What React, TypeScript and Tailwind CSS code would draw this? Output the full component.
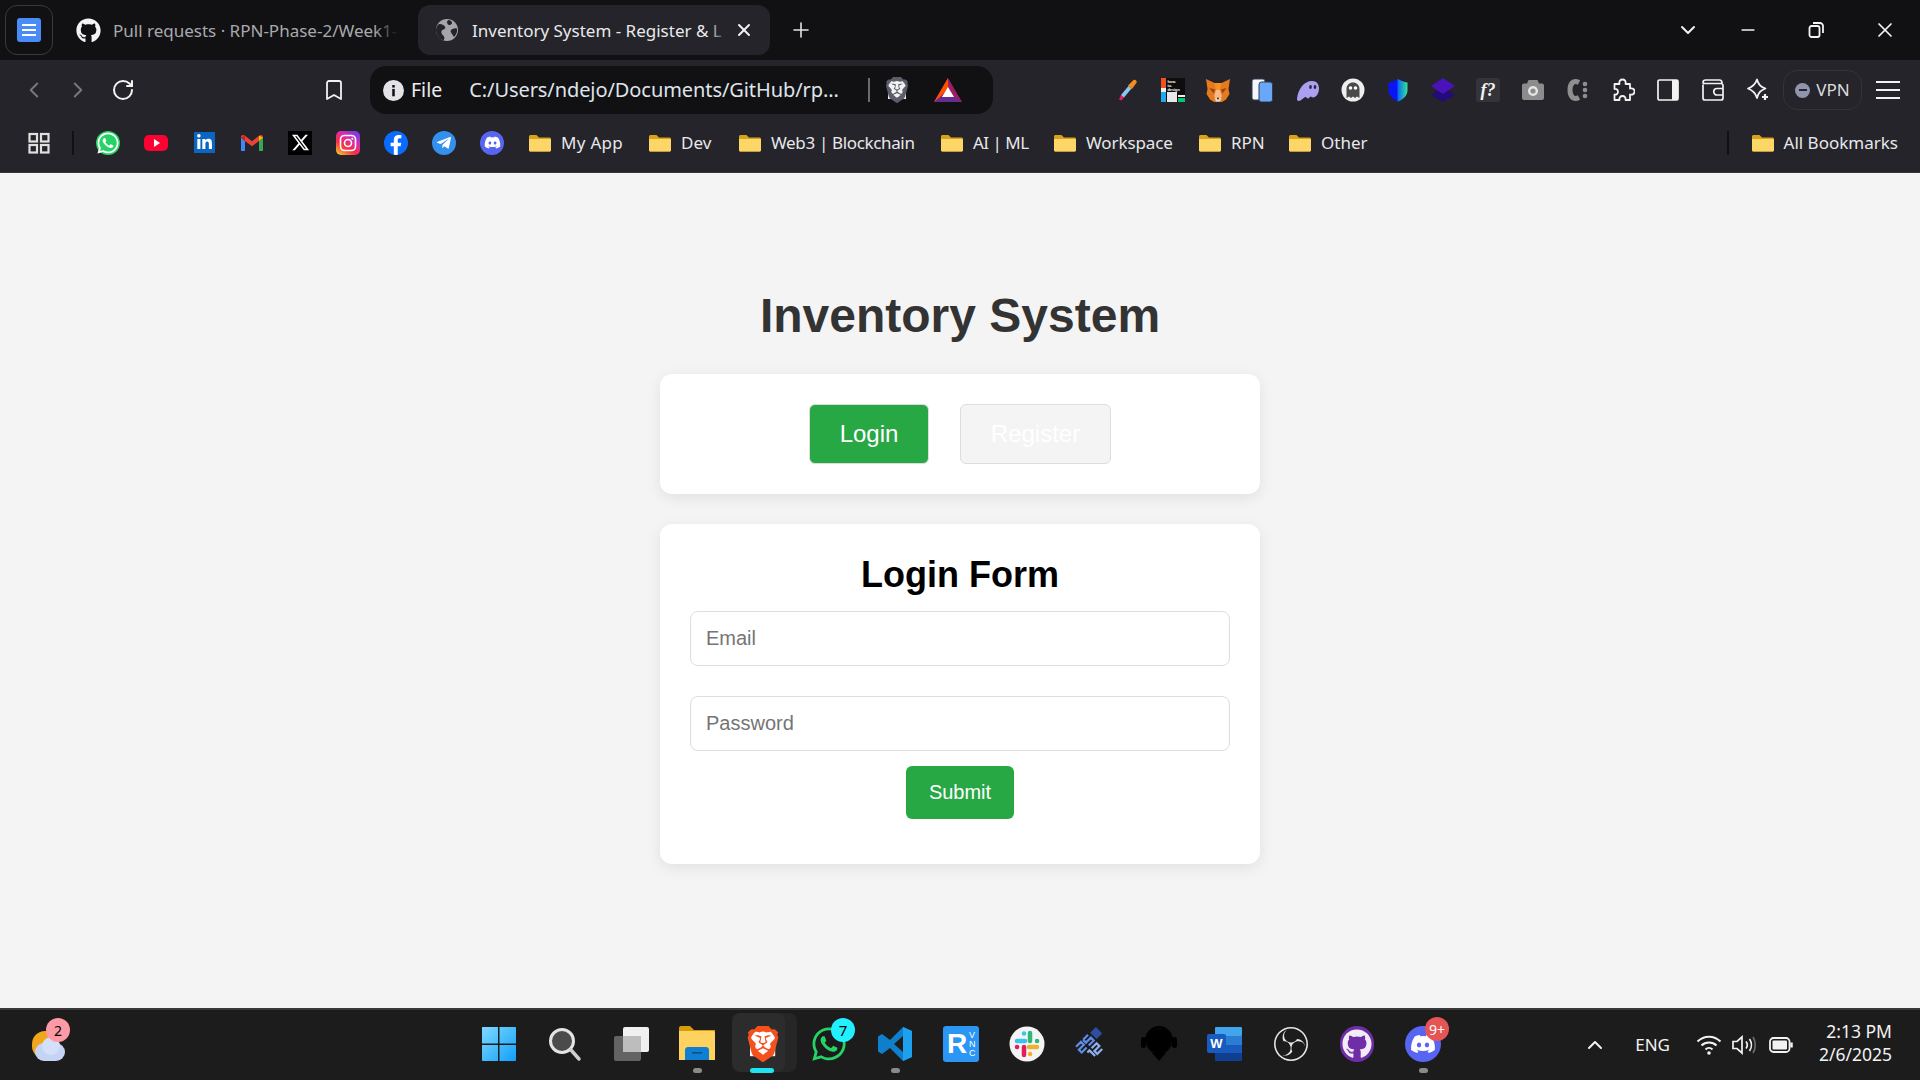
import React from 'react';
import { FaWhatsapp, FaLinkedinIn, FaFacebookF, FaTelegramPlane, FaDiscord, FaGithub } from 'react-icons/fa';
import { FaXTwitter } from 'react-icons/fa6';
import { SiBrave, SiObsstudio } from 'react-icons/si';
import { ChevronLeft, ChevronRight, RotateCw, Bookmark, Plus, X, ChevronDown, Minus, ChevronUp } from 'lucide-react';

const Folder = () => (
  <svg width="24" height="24" viewBox="0 0 24 24" className="shrink-0">
    <path d="M1 5.500C1 4.700 1.700 4 2.500 4h6l2.500 2.500h10.500c.8 0 1.500.7 1.500 1.500v11c0 .8-.7 1.500-1.500 1.500h-19C1.700 20.500 1 19.800 1 19z" fill="#d9a21b" />
    <path d="M1 8h21.500c.3 0 .5.200.5.500V19c0 .8-.7 1.500-1.500 1.500h-19C1.700 20.500 1 19.800 1 19z" fill="#fcd667" />
  </svg>
);

const bookmarks = [
  { name: 'My App', width: 'w-[62px]', fit: 'tracking-[0.3px]' },
  { name: 'Dev', width: 'w-[32px]', fit: 'tracking-[0px]' },
  { name: 'Web3 | Blockchain', width: 'w-[144px]', fit: 'tracking-[-0.35px]' },
  { name: 'AI | ML', width: 'w-[55px]', fit: 'tracking-[-0.5px]' },
  { name: 'Workspace', width: 'w-[87px]', fit: 'tracking-[-0.1px]' },
  { name: 'RPN', width: 'w-[32px]', fit: 'tracking-[-0.1px]' },
  { name: 'Other', width: 'w-[45px]', fit: 'tracking-[0px]' },
];

const Gmail = () => (
  <svg width="24" height="24" viewBox="0 0 24 24">
    <path d="M1 6.500V20h4V10z" fill="#4285f4" />
    <path d="M23 6.500V20h-4V10z" fill="#34a853" />
    <path d="M1 6.500C1 4 3.500 3.500 5 4.800l7 5.400 7-5.400C20.500 3.500 23 4 23 6.500L19 10l-7 5.200L5 10z" fill="#ea4335" />
    <path d="M19 4.800 23 6.500 19 10z" fill="#fbbc04" />
    <path d="M1 6.500 5 4.800V10z" fill="#c5221f" />
  </svg>
);

const Instagram = () => (
  <svg width="24" height="24" viewBox="0 0 24 24">
    <defs>
      <linearGradient id="ig" x1="0.1" y1="1" x2="0.8" y2="0">
        <stop offset="0" stopColor="#fdc92f" />
        <stop offset="0.35" stopColor="#f5313f" />
        <stop offset="0.7" stopColor="#d92bb5" />
        <stop offset="1" stopColor="#6d3ee8" />
      </linearGradient>
    </defs>
    <rect width="24" height="24" rx="5" fill="url(#ig)" />
    <rect x="4.500" y="4.500" width="15" height="15" rx="4" fill="none" stroke="#fff" strokeWidth="1.600" />
    <circle cx="12" cy="12" r="3.500" fill="none" stroke="#fff" strokeWidth="1.600" />
    <circle cx="16.300" cy="7.700" r="1" fill="#fff" />
  </svg>
);

const Dropper = () => (
  <svg width="24" height="24" viewBox="0 0 24 24">
    <path d="M3 21.500 5 17l3 2.500-2.500 3z" fill="#e91e63" />
    <path d="M5 17 12.500 8l3 2.500L8 19.500z" fill="#8ec5f0" />
    <path d="M12 7.500 17.500 2c1.500-1.200 4 .8 3 2.800L16 11z" fill="#f58a1f" />
  </svg>
);

const HowToDesign = () => (
  <svg width="24" height="24" viewBox="0 0 24 24">
    <rect width="24" height="24" fill="#0d0d0d" />
    <rect width="5" height="10" fill="#f1511b" />
    <rect y="10" width="5" height="4" fill="#eeeeee" />
    <rect y="14" width="5" height="10" fill="#1eaaf1" />
    <rect x="6" y="14" width="10" height="10" fill="#e8e8e8" />
    <rect x="17" y="17" width="7" height="2" fill="#eeeeee" />
    <rect x="17" y="20" width="7" height="4" fill="#00c76a" />
    <text x="6.500" y="5" fontSize="3.800" fontWeight="700" fill="#fff" fontFamily="Liberation Sans, sans-serif">how.</text>
    <text x="6.500" y="9" fontSize="3.800" fontWeight="700" fill="#fff" fontFamily="Liberation Sans, sans-serif">to.</text>
    <text x="6.500" y="13" fontSize="3.800" fontWeight="700" fill="#fff" fontFamily="Liberation Sans, sans-serif">design</text>
  </svg>
);

const Fox = () => (
  <svg width="24" height="24" viewBox="0 0 24 24">
    <path d="M0 1 8.500 5h7L24 1l-1.500 10 1 5-3.500 5.500-4 2.500H8l-4-2.500L.5 16l1-5z" fill="#e8791c" />
    <path d="M8.500 5h7L14 12h-4z" fill="#f6921e" />
    <path d="M3.500 10l5.500 1.500L7.500 15.500zM20.500 10L15 11.500l1.500 4z" fill="#8a4a18" />
    <path d="M10 12h4l2 6.500-4 3.500-4-3.500z" fill="#f7b98a" />
    <path d="M8.500 20h7l-1.500 3.500h-4z" fill="#e9d9ca" />
    <circle cx="12" cy="20.500" r="1" fill="#3b2a1d" />
  </svg>
);

const Cards = () => (
  <svg width="24" height="24" viewBox="0 0 24 24">
    <rect x="1" y="1" width="13" height="21" rx="2" fill="#f5f7fb" stroke="#2f3b52" />
    <rect x="8" y="4" width="13.500" height="20" rx="2.500" fill="#6aa7f8" stroke="#2f3b52" />
  </svg>
);

const Phantom = () => (
  <svg width="24" height="24" viewBox="0 0 24 24">
    <path d="M1 21C2 11 8 3 16 3c5 0 7 3.500 7 7.500 0 5-3 9-6 9-1.200 0-1.500-1-2.300-1-.9 0-1.300 2-2.700 2-1.200 0-1.500-1.500-2.300-1.500C7.500 19.500 5 23 3 23c-1.300 0-2.200-.8-2-2z" fill="#ab9ff2" />
    <ellipse cx="14.500" cy="9" rx="1.300" ry="2" fill="#24242a" />
    <ellipse cx="19" cy="9" rx="1.300" ry="2" fill="#24242a" />
  </svg>
);

const Ghostery = () => (
  <svg width="24" height="24" viewBox="0 0 24 24">
    <circle cx="12" cy="12" r="11.500" fill="#efefef" />
    <path d="M5.500 20V11C5.500 7 8.500 4.500 12 4.500S18.500 7 18.500 11v9l-2.500-1.500L14 20l-2-1.500L10 20l-2-1.500z" fill="#4a4a4a" />
    <circle cx="9.500" cy="10" r="1.800" fill="#fff" />
    <circle cx="14.500" cy="10" r="1.800" fill="#fff" />
  </svg>
);

const Shield = () => (
  <svg width="24" height="24" viewBox="0 0 24 24">
    <defs>
      <linearGradient id="sh" x1="0" y1="0" x2="1" y2="0">
        <stop offset="0.45" stopColor="#0a14f5" />
        <stop offset="0.5" stopColor="#0b6df0" />
        <stop offset="1" stopColor="#35e39a" />
      </linearGradient>
    </defs>
    <path d="M12 1c3 2 6 3 9.500 3.500V12c0 6-4.500 9.500-9.500 11.500C7 21.500 2.500 18 2.500 12V4.500C6 4 9 3 12 1z" fill="url(#sh)" />
  </svg>
);

const Layers = () => (
  <svg width="24" height="24" viewBox="0 0 24 24">
    <path d="M12 9 24 17l-12 7L0 17z" fill="#230b7a" />
    <path d="M12 0 24 8l-12 8L0 8z" fill="#4a12b8" />
  </svg>
);

const FontTile = () => (
  <div className="flex h-6 w-6 items-center justify-center rounded-[3px] bg-[#333338] font-['Liberation_Serif',serif] text-[18px] font-bold italic leading-none text-[#f2f2f2]">
    f?
  </div>
);

const Camera = () => (
  <svg width="24" height="24" viewBox="0 0 24 24">
    <path d="M1 7.500C1 6.400 1.900 5.500 3 5.500h3L7.500 2h9L18 5.500h3c1.100 0 2 .9 2 2V20c0 1.100-.9 2-2 2H3c-1.100 0-2-.9-2-2z" fill="#8c8c8c" />
    <circle cx="12" cy="13" r="5" fill="#e5e5e5" />
    <circle cx="12" cy="13" r="2.600" fill="#8c8c8c" />
  </svg>
);

const CDots = () => (
  <svg width="24" height="24" viewBox="0 0 24 24">
    <path d="M13 4.500C7 1.500 4 6 4 12s3 10.500 9 7.500" fill="none" stroke="#8f8f8f" strokeWidth="5" />
    <circle cx="19" cy="6" r="2.300" fill="#8f8f8f" />
    <circle cx="19" cy="12" r="2.300" fill="#8f8f8f" />
    <circle cx="19" cy="18" r="2.300" fill="#8f8f8f" />
  </svg>
);

const PuzzlePiece = () => (
  <svg width="24" height="24" viewBox="0 0 24 24" fill="none" stroke="#f2f2f2" strokeWidth="1.800" strokeLinejoin="round">
    <path d="M3.500 6H8.500c-.8-3 1-4.500 3-4.500s3.800 1.500 3 4.500H19v4.500c3-.8 4.500 1 4.500 3s-1.500 3.800-4.500 3V22h-4.500c.5-2.500-1-4-3-4s-3.500 1.500-3 4H3.500v-5.500c2 .5 3.500-1 3.500-2.800S5.500 10.500 3.500 11z" />
  </svg>
);

const SidePanel = () => (
  <svg width="24" height="24" viewBox="0 0 24 24">
    <rect x="2" y="2" width="20" height="20" rx="1.500" fill="none" stroke="#f2f2f2" strokeWidth="1.700" />
    <rect x="16" y="2" width="6" height="20" fill="#f2f2f2" />
  </svg>
);

const Wallet = () => (
  <svg width="24" height="24" viewBox="0 0 24 24" fill="none" stroke="#f2f2f2" strokeWidth="1.700">
    <path d="M2 6.500V20c0 1.100.9 2 2 2h16c1.100 0 2-.9 2-2V7.500c0-1.100-.9-2-2-2H4C3 5.500 2 5 2 4.500 2 3 3 2 4.500 2h14C20 2 21 3 21 5" />
    <path d="M22 10.500h-6a3 3 0 0 0 0 6.500h6" />
  </svg>
);

const Leo = () => (
  <svg width="24" height="24" viewBox="0 0 24 24" fill="none" stroke="#f2f2f2" strokeWidth="1.800">
    <path d="M11 1.500c1.500 5 3 7 8.500 9-5 2-7 4-8.500 9.500C9.500 15 7.500 12.500 2 10.500c5.500-2 7.500-4.500 9-9z" strokeLinejoin="round" />
    <path d="M19 16v6M16 19h6" strokeWidth="2.200" />
  </svg>
);

const TabGlobe = () => (
  <svg width="24" height="24" viewBox="0 0 24 24" className="shrink-0">
    <circle cx="12" cy="12" r="11" fill="#a6a6aa" />
    <path d="M4 6c2 0 4 .5 5.500 2S10 11 8.500 11.500 6 13 6.500 15 9 17 9.500 20l-1 2.500C4 21 1 17 1 12c0-2 1-4.500 3-6zM14 2c2 .5 3 1.500 3 3s-2 2-3 2-2-2-2-3 1-2 2-2zM22 10.500c.5 3-.5 6-3 8.500-1-1.500-2-3-3-4.500s0-3 1.500-3.500 3-1 4.500-.5z" fill="#24242a" />
  </svg>
);

const BraveLion = ({ size, outer, inner }: { size: number; outer: string; inner: string }) => (
  <span className="relative flex items-center justify-center">
    <svg width={size * 0.7} height={size * 0.7} viewBox="0 0 10 10" className="absolute">
      <rect width="10" height="10" fill={inner} />
    </svg>
    <SiBrave size={size} color={outer} className="relative" />
  </span>
);

const BatTriangle = () => (
  <svg width="28" height="24" viewBox="0 0 28 24">
    <path d="M14 0 28 24H0z" fill="#9b1f63" />
    <path d="M14 0v11L7 18l-7 6z" fill="#ff5000" />
    <path d="M14 9l6 10H8z" fill="#fff" />
    <path d="M0 24l7-5h14l7 5z" fill="#662d91" />
  </svg>
);

const AppsGrid = ({ stroke }: { stroke: string }) => (
  <svg width="24" height="24" viewBox="0 0 24 24" fill="none" stroke={stroke} strokeWidth="2.200">
    <rect x="2.500" y="3" width="7.500" height="7.500" />
    <rect x="14" y="3" width="7.500" height="7.500" />
    <rect x="2.500" y="14" width="7.500" height="7.500" />
    <rect x="14" y="14" width="7.500" height="7.500" />
  </svg>
);

const WinLogo = () => (
  <svg width="36" height="36" viewBox="0 0 36 36">
    <defs>
      <linearGradient id="wa" x1="0" y1="0" x2="1" y2="1">
        <stop offset="0" stopColor="#7fd9ff" />
        <stop offset="1" stopColor="#10a0fa" />
      </linearGradient>
    </defs>
    <path d="M1 2c0-.6.400-1 1-1h15v16.500H1zM18.500 1H34c.6 0 1 .4 1 1v15.500H18.500zM1 19h16v16H2c-.6 0-1-.4-1-1zM18.500 19H35v15c0 .6-.4 1-1 1H18.500z" fill="url(#wa)" />
  </svg>
);

const TaskSearch = () => (
  <svg width="36" height="36" viewBox="0 0 36 36">
    <circle cx="15" cy="15" r="11.500" fill="#4b4b4b" stroke="#e4e4e4" strokeWidth="3" />
    <path d="M24 24l8 9" stroke="#cfcfcf" strokeWidth="3.500" strokeLinecap="round" />
  </svg>
);

const TaskView = () => (
  <svg width="36" height="36" viewBox="0 0 36 36">
    <rect x="10" y="1" width="26" height="25" rx="2" fill="#f0f0f0" />
    <rect x="1" y="10" width="27" height="25" rx="2" fill="#6c6c6c" fillOpacity="0.9" />
    <rect x="10" y="10" width="18" height="16" fill="#bdbdbd" />
  </svg>
);

const Explorer = () => (
  <svg width="36" height="36" viewBox="0 0 36 36">
    <path d="M0 2c0-1 .7-2 2-2h9l4 4h21v30H0z" fill="#d79d08" />
    <path d="M0 5h34c1 0 2 .8 2 2v27H0z" fill="#fed25f" />
    <path d="M6 24c0-1.500 1-3 3-3h18c2 0 3 1.500 3 3v10H6z" fill="#0e7fd2" />
    <rect x="13" y="26" width="10" height="1.600" fill="#0a4f8a" />
  </svg>
);

const VsCode = () => (
  <svg width="36" height="36" viewBox="0 0 36 36">
    <path d="M26 1 13 14 5 8 1 10.500v15L5 28l8-6 13 13 9-4V5zM26 10v16l-9-8z" fill="#0f7fcc" fillRule="evenodd" />
    <path d="M26 1l9 4v26l-9 4z" fill="#1fa0ee" />
  </svg>
);

const Rvnc = () => (
  <div className="relative flex h-9 w-9 items-center rounded-[3px] bg-[#2b96f3]">
    <span className="pl-[4px] font-['Liberation_Sans',sans-serif] text-[28px] font-bold leading-none text-white">R</span>
    <span className="absolute right-[2px] top-[5px] w-[8px] font-['Liberation_Sans',sans-serif] text-[9px] leading-[9px] text-white">V N C</span>
  </div>
);

const Slack = () => (
  <svg width="36" height="36" viewBox="0 0 36 36">
    <circle cx="18" cy="18" r="17.500" fill="#f4f4f4" />
    <g strokeWidth="4.500" strokeLinecap="round" fill="none">
      <path d="M8 15h8" stroke="#36c5f0" />
      <path d="M15 7.500v.1" stroke="#36c5f0" />
      <path d="M21 7v8" stroke="#2eb67d" />
      <path d="M28 15h.1" stroke="#2eb67d" />
      <path d="M20 21h8" stroke="#ecb22e" />
      <path d="M21 28h.1" stroke="#ecb22e" />
      <path d="M15 21v8" stroke="#e01e5a" />
      <path d="M8 21h.1" stroke="#e01e5a" />
    </g>
  </svg>
);

const Pcsx2 = () => (
  <svg width="36" height="36" viewBox="0 0 36 36" fill="none" strokeWidth="2.200">
    <g transform="rotate(-45 18 18)">
      <path d="M4 8h7v4H4v4h7M14 8h7M14 8v4h7v4h-7" stroke="#5f8ce8" />
      <path d="M8 20h3v8M14 20h7v4h-7v4h7" stroke="#8fb0f0" />
      <rect x="24" y="8" width="8" height="9" fill="#2c4fa0" />
    </g>
  </svg>
);

const Headset = () => (
  <svg width="36" height="36" viewBox="0 0 36 36" fill="#000">
    <circle cx="18" cy="15" r="13" stroke="#0a0a0a" strokeWidth="1" />
    <rect x="0" y="11" width="5" height="11" rx="2.500" />
    <rect x="31" y="11" width="5" height="11" rx="2.500" />
    <path d="M11 27h14l-7 8z" />
    <path d="M5 15C5 7 11 1 18 1s13 6 13 14" fill="none" stroke="#000" strokeWidth="2" />
  </svg>
);

const Word = () => (
  <svg width="36" height="36" viewBox="0 0 36 36">
    <rect x="8" y="1" width="27" height="9" rx="1" fill="#41a5ee" />
    <rect x="8" y="10" width="27" height="9" fill="#2b7cd3" />
    <rect x="8" y="19" width="27" height="8" fill="#185abd" />
    <path d="M8 27h27v7c0 .6-.4 1-1 1H9c-.6 0-1-.4-1-1z" fill="#103f91" />
  </svg>
);

const Badge = ({ text, className }: { text: string; className: string }) => (
  <span className={`absolute flex items-center justify-center rounded-full font-['Noto_Sans',sans-serif] ${className}`}>{text}</span>
);

const TaskItem = ({ children, dot }: { children: React.ReactNode; dot?: boolean }) => (
  <div className="relative flex h-full w-[66px] items-center justify-center pb-[2px]">
    <div className="relative flex h-9 w-9 items-center justify-center">{children}</div>
    {dot && <span className="absolute bottom-[7px] left-[29px] h-[5px] w-[9px] rounded-full bg-[#8a8a8a]" />}
  </div>
);

const toolbarIcons = [Dropper, HowToDesign, Fox, Cards, Phantom, Ghostery, Shield, Layers, FontTile, Camera, CDots];

export default function App() {
  return (
    <div className="flex h-screen w-full flex-col overflow-hidden font-['Noto_Sans',sans-serif] text-[17px]">
      {/* tab strip */}
      <div className="flex h-[60px] shrink-0 items-center bg-[#111113] pl-[5px]">
        <div className="flex h-[50px] w-[48px] shrink-0 items-center justify-center rounded-[12px] border border-[#3a3a3e]">
          <div className="flex h-[24px] w-[24px] flex-col justify-center gap-[3px] rounded-[3px] bg-[#4a8cf7] px-[5px]">
            <span className="h-[2px] bg-white" />
            <span className="h-[2px] bg-white" />
            <span className="h-[2px] bg-white" />
          </div>
        </div>
        <div className="flex h-[50px] w-[365px] shrink-0 items-center gap-[12px] pl-[23px]">
          <FaGithub size={25} color="#f4f4f4" className="shrink-0" />
          <div className="relative w-[285px] overflow-hidden whitespace-nowrap pt-[1px] text-[#a9a9ad]">
            Pull requests · RPN-Phase-2/Week1-
            <span className="absolute inset-y-0 right-0 w-[24px] bg-gradient-to-r from-transparent to-[#111113]" />
          </div>
        </div>
        <div className="flex h-[50px] w-[352px] shrink-0 items-center rounded-[12px] bg-[#24242a] pl-[17px]">
          <TabGlobe />
          <div className="relative ml-[13px] w-[256px] overflow-hidden whitespace-nowrap pt-[1px] text-[#e9e9eb]">
            Inventory System - Register &amp; L
            <span className="absolute inset-y-0 right-0 w-[20px] bg-gradient-to-r from-transparent to-[#24242a]" />
          </div>
          <X size={20} color="#f2f2f2" strokeWidth={2.400} className="ml-[6px] shrink-0" />
        </div>
        <Plus size={24} color="#e4e4e4" strokeWidth={1.600} className="ml-[19px] shrink-0" />
        <div className="ml-auto flex items-center">
          <ChevronDown size={24} color="#f2f2f2" strokeWidth={2} />
          <Minus size={20} color="#f2f2f2" strokeWidth={2} className="ml-[38px]" />
          <svg width="20" height="20" viewBox="0 0 20 20" fill="none" stroke="#f2f2f2" strokeWidth="1.800" className="ml-[48px]">
            <rect x="3.500" y="6" width="10" height="11" rx="2" />
            <path d="M7 3h7c1.500 0 3 1.500 3 3v7" />
          </svg>
          <X size={24} color="#f2f2f2" strokeWidth={1.700} className="ml-[47px] mr-[23px]" />
        </div>
      </div>

      {/* toolbar */}
      <div className="flex h-[60px] shrink-0 items-center bg-[#24242a] pl-[21px] pr-[20px]">
        <ChevronLeft size={26} color="#77777c" strokeWidth={1.800} />
        <ChevronRight size={26} color="#77777c" strokeWidth={1.800} className="ml-[18px]" />
        <RotateCw size={24} color="#f2f2f2" strokeWidth={2} className="ml-[20px]" />
        <Bookmark size={24} color="#f2f2f2" strokeWidth={1.800} className="ml-[187px]" />
        <div className="ml-[24px] flex h-[48px] w-[623px] shrink-0 items-center rounded-[16px] bg-[#111114] pl-[13px]">
          <svg width="21" height="21" viewBox="0 0 20 20" className="shrink-0">
            <circle cx="10" cy="10" r="10" fill="#e4e4e8" />
            <rect x="8.800" y="8.500" width="2.400" height="7" fill="#111114" />
            <rect x="8.800" y="4.800" width="2.400" height="2.400" fill="#111114" />
          </svg>
          <span className="ml-[7px] text-[19.5px] text-[#ececee]">File</span>
          <span className="ml-[27px] w-[372px] whitespace-nowrap text-[20px] tracking-[-0.08px] text-[#dfe4ea]">C:/Users/ndejo/Documents/GitHub/rp...</span>
          <span className="ml-[27px] h-[24px] w-[2px] shrink-0 bg-[#6b6b70]" />
          <span className="ml-[15px] flex w-[24px] justify-center">
            <BraveLion size={26} outer="#5b5d68" inner="#f2f2f2" />
          </span>
          <span className="ml-[25px]"><BatTriangle /></span>
        </div>
        <div className="ml-auto flex items-center gap-[21px]">
          {toolbarIcons.map((Icon, i) => <Icon key={i} />)}
          <PuzzlePiece />
          <SidePanel />
          <Wallet />
          <Leo />
        </div>
        <div className="ml-[13px] flex h-[40px] w-[79px] shrink-0 items-center justify-center gap-[6px] rounded-[14px] border border-[#333338] text-[#dcdcde]">
          <span className="flex h-[15px] w-[15px] items-center justify-center rounded-full bg-[#9094ad]">
            <span className="h-[2px] w-[8px] bg-[#24242a]" />
          </span>
          <span className="text-[17px]">VPN</span>
        </div>
        <div className="ml-[14px] flex w-[24px] flex-col gap-[6px]">
          <span className="h-[2px] bg-[#f2f2f2]" />
          <span className="h-[2px] bg-[#f2f2f2]" />
          <span className="h-[2px] bg-[#f2f2f2]" />
        </div>
      </div>

      {/* bookmarks bar */}
      <div className="flex h-[53px] shrink-0 items-center border-b border-[#35353a] bg-[#24242a] pb-[7px] pl-[27px] pr-[22px]">
        <AppsGrid stroke="#e0e0e0" />
        <span className="ml-[21px] h-[24px] w-[2px] bg-[#111114]" />
        <div className="ml-[22px] flex items-center gap-[24px]">
          <div className="flex h-6 w-6 items-center justify-center rounded-full bg-[#25d366]"><FaWhatsapp size={24} color="#fff" /></div>
          <div className="flex h-6 w-6 items-center justify-center">
            <div className="flex h-[16px] w-[24px] items-center justify-center rounded-[5px] bg-[#ff0033]">
              <span className="ml-[1px] h-0 w-0 border-y-[4px] border-l-[6px] border-y-transparent border-l-white" />
            </div>
          </div>
          <div className="flex h-6 w-6 items-center justify-center">
            <div className="flex h-[21px] w-[21px] items-center justify-center bg-[#0a66c2]">
              <FaLinkedinIn size={17} color="#fff" />
            </div>
          </div>
          <Gmail />
          <div className="flex h-6 w-6 items-center justify-center bg-black"><FaXTwitter size={19} color="#fff" /></div>
          <Instagram />
          <div className="flex h-6 w-6 items-end justify-center overflow-hidden rounded-full bg-[#0a6cff]"><FaFacebookF size={20} color="#fff" /></div>
          <div className="flex h-6 w-6 items-center justify-center rounded-full bg-[#3390ec]"><FaTelegramPlane size={16} color="#fff" /></div>
          <div className="flex h-6 w-6 items-center justify-center rounded-full bg-[#5865f2]"><FaDiscord size={17} color="#fff" /></div>
        </div>
        <div className="ml-[24px] flex items-center gap-[25px]">
          {bookmarks.map(item => (
            <div key={item.name} className="flex items-center gap-[9px] text-[#e8e8ea]">
              <Folder />
              <span className={`whitespace-nowrap ${item.width} ${item.fit}`}>{item.name}</span>
            </div>
          ))}
        </div>
        <span className="ml-auto h-[24px] w-[2px] bg-[#111114]" />
        <div className="ml-[22px] flex items-center gap-[9px] text-[#e8e8ea]">
          <Folder />
          <span>All Bookmarks</span>
        </div>
      </div>

      {/* page */}
      <main className="flex min-h-0 flex-1 flex-col items-center bg-[#f4f4f4] pt-[115px] font-['Liberation_Sans',sans-serif]">
        <h1 className="mb-[31px] text-[48px] font-bold leading-[55px] text-[#333]">Inventory System</h1>
        <div className="mb-[30px] flex w-[600px] justify-center gap-[31px] rounded-[12px] bg-white p-[30px] shadow-[0_4px_15px_rgba(0,0,0,0.08)]">
          <button className="h-[60px] w-[120px] rounded-[6px] border border-[#ddd] bg-[#28a745] text-[24px] text-white">Login</button>
          <button className="h-[60px] w-[151px] rounded-[6px] border border-[#ddd] bg-[#f4f4f4] text-[24px] text-white">Register</button>
        </div>
        <div className="flex h-[340px] w-[600px] flex-col items-center rounded-[12px] bg-white p-[30px] shadow-[0_4px_15px_rgba(0,0,0,0.08)]">
          <h2 className="mb-[16px] text-[36px] font-bold leading-[41px] text-black">Login Form</h2>
          <input placeholder="Email" className="mb-[30px] h-[55px] w-full rounded-[8px] border border-[#ddd] bg-white px-[15px] text-[20px] outline-none placeholder:text-[#757575]" />
          <input placeholder="Password" className="mb-[15px] h-[55px] w-full rounded-[8px] border border-[#ddd] bg-white px-[15px] text-[20px] outline-none placeholder:text-[#757575]" />
          <button className="h-[53px] w-[108px] rounded-[6px] bg-[#28a745] pb-[1px] text-[20px] text-white">Submit</button>
        </div>
      </main>

      {/* taskbar */}
      <div className="grid h-[72px] shrink-0 grid-cols-[1fr_auto_1fr] items-center border-t-2 border-[#3a3a3a] bg-[#1c1c1c]">
        <div className="relative h-full">
          <div className="absolute left-[32px] top-[15px] h-[36px] w-[36px]">
            <span className="absolute left-0 top-[6px] h-[28px] w-[26px] rounded-full bg-[#f0a51c]" />
            <span className="absolute bottom-0 left-[3px] h-[18px] w-[30px] rounded-[9px] bg-[#c4d4f5]" />
            <span className="absolute bottom-[6px] left-[10px] h-[18px] w-[18px] rounded-full bg-[#d5e0f8]" />
            <Badge text="2" className="left-[14px] top-[-7px] h-[24px] w-[24px] bg-[#fd9aa6] text-[14px] text-black" />
          </div>
        </div>
        <div className="ml-[2px] flex h-full items-center">
          <TaskItem><WinLogo /></TaskItem>
          <TaskItem><TaskSearch /></TaskItem>
          <TaskItem><TaskView /></TaskItem>
          <TaskItem dot><Explorer /></TaskItem>
          <div className="relative flex h-full w-[66px] items-center justify-center pb-[2px]">
            <span className="absolute left-[7px] top-[3px] h-[59px] w-[60px] rounded-[8px] bg-[#262626]" />
            <span className="absolute left-[2px] top-[3px] h-[59px] w-[53px] rounded-[8px] bg-[#2c2c2c]" />
            <span className="relative"><BraveLion size={36} outer="#f4511e" inner="#ffffff" /></span>
            <span className="absolute bottom-[7px] left-[20px] h-[5px] w-[24px] rounded-full bg-[#22e2f2]" />
          </div>
          <TaskItem>
            <FaWhatsapp size={38} color="#25d366" />
            <Badge text="7" className="left-[20px] top-[-8px] h-[24px] w-[24px] bg-[#22f0ff] text-[15px] text-black" />
          </TaskItem>
          <TaskItem dot><VsCode /></TaskItem>
          <TaskItem><Rvnc /></TaskItem>
          <TaskItem><Slack /></TaskItem>
          <TaskItem><Pcsx2 /></TaskItem>
          <TaskItem><Headset /></TaskItem>
          <TaskItem>
            <Word />
            <span className="absolute left-0 top-[8px] flex h-[19px] w-[19px] items-center justify-center rounded-[2px] bg-[#185abd] font-['Liberation_Sans',sans-serif] text-[13px] font-bold text-white">W</span>
          </TaskItem>
          <TaskItem><SiObsstudio size={34} color="#e6e6e6" /></TaskItem>
          <TaskItem>
            <div className="flex h-9 w-[34px] items-center justify-center rounded-full bg-[#6f2da8]"><FaGithub size={30} color="#f2ecf8" /></div>
          </TaskItem>
          <TaskItem dot>
            <div className="flex h-9 w-9 items-center justify-center rounded-full bg-[#5865f2]"><FaDiscord size={26} color="#fff" /></div>
            <Badge text="9+" className="left-[20px] top-[-9px] h-[24px] w-[24px] bg-[#e65555] text-[14px] text-white" />
          </TaskItem>
        </div>
        <div className="flex items-center justify-end pr-[28px] text-[#f2f2f2]">
          <ChevronUp size={24} strokeWidth={2} />
          <span className="ml-[28px] text-[17px]">ENG</span>
          <svg width="26" height="22" viewBox="0 0 26 22" fill="none" stroke="#f2f2f2" strokeWidth="2" className="ml-[26px]">
            <path d="M1.500 7.500C8 1 18 1 24.500 7.500M5.500 11.500c4-4 11-4 15 0M9.500 15.500c2-2 5-2 7 0" />
            <circle cx="13" cy="19" r="1.800" fill="#f2f2f2" stroke="none" />
          </svg>
          <svg width="26" height="22" viewBox="0 0 26 22" fill="none" stroke="#f2f2f2" strokeWidth="1.700" className="ml-[9px]">
            <path d="M2 7.500h4l5-4.500v16l-5-4.500H2zM15 7.500c1.500 2 1.500 5 0 7M18.500 5c2.500 3.500 2.500 8.500 0 12" />
            <path d="M22 3c3 4.500 3 11.500 0 16" stroke="#6a6a6a" />
          </svg>
          <svg width="24" height="16" viewBox="0 0 24 16" fill="none" stroke="#f2f2f2" strokeWidth="1.800" className="ml-[12px]">
            <rect x="1" y="1" width="19.500" height="14" rx="3.500" />
            <rect x="3.500" y="3.500" width="14.500" height="9" rx="1" fill="#f2f2f2" stroke="none" />
            <path d="M22.500 5.500v5" strokeWidth="2.500" />
          </svg>
          <div className="ml-[25px] flex w-[74px] flex-col items-end pb-[4px] text-[17.5px] leading-[23px]">
            <span className="whitespace-nowrap">2:13 PM</span>
            <span className="whitespace-nowrap">2/6/2025</span>
          </div>
        </div>
      </div>
    </div>
  );
}
